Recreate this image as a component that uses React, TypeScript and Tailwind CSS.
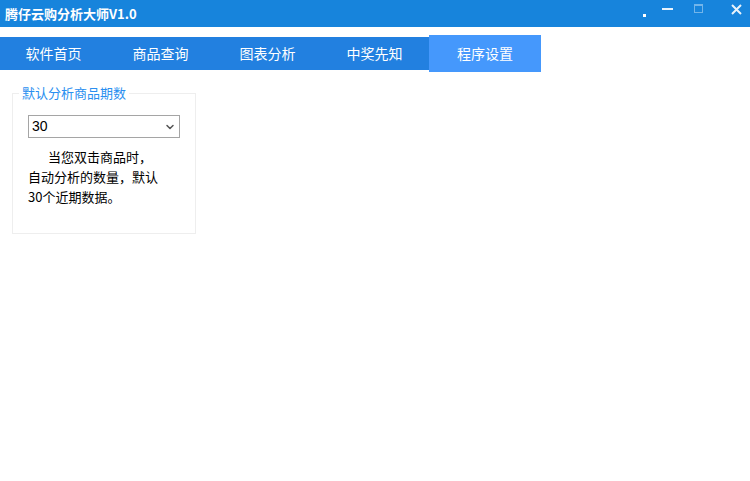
import { ChevronDown } from "lucide-react";

const tabs = ["软件首页", "商品查询", "图表分析", "中奖先知"];

export default function App() {
  return (
    <div
      className="w-[750px] h-[481px] bg-white overflow-hidden"
      style={{ fontFamily: '"Microsoft YaHei", "Noto Sans CJK SC", sans-serif' }}
    >
      {/* title bar */}
      <div className="h-[27px] bg-[#1784dc] flex items-center justify-between pl-[5px]">
        <span className="text-white text-[13px] font-bold leading-none">腾仔云购分析大师V1.0</span>
        <div className="flex items-center h-full text-white">
          <div className="w-[3px] h-[3px] bg-white mt-[4px] mr-[16px]" />
          <div className="w-[11px] h-[2px] bg-white/90 mb-[10px] mr-[21px]" />
          <div className="w-[9px] h-[9px] border border-white/40 border-t-2 mb-[10px] mr-[28px]" />
          <svg width="11" height="11" viewBox="0 0 11 11" className="mb-[8px] mr-[8px]">
            <path d="M1 1L10 10M10 1L1 10" stroke="white" strokeWidth="2" opacity="0.9" />
          </svg>
        </div>
      </div>

      {/* tabs */}
      <div className="mt-[8px] flex items-center">
        <div className="flex h-[33px] bg-[#2280e0]">
          {tabs.map((t) => (
            <div key={t} className="w-[107px] flex items-center justify-center text-white text-[14px]">
              {t}
            </div>
          ))}
          <div className="w-[1px]" />
        </div>
        <div className="w-[112px] h-[37px] bg-[#4598fc] flex items-center justify-center text-white text-[14px]">
          程序设置
        </div>
      </div>

      {/* settings group */}
      <div className="relative mt-[21px] ml-[12px] w-[184px] h-[141px] border border-[#eeeeee]">
        <span className="absolute -top-[10px] left-[6px] bg-white px-[3px] text-[13px] text-[#2a8ff0] leading-[18px]">
          默认分析商品期数
        </span>
        <div className="mt-[21px] ml-[15px] w-[152px] h-[23px] border border-[#a5a5a5] flex items-center justify-between px-[3px]">
          <span className="text-[14px] text-black" style={{ fontFamily: '"Liberation Sans", sans-serif' }}>30</span>
          <ChevronDown className="w-[12px] h-[12px] text-[#555]" strokeWidth={3} />
        </div>
        <div className="mt-[9px] ml-[15px] w-[150px] text-[13px] leading-[20px] text-black">
          <div className="pl-[20px]">当您双击商品时，</div>
          <div>自动分析的数量，默认</div>
          <div>30个近期数据。</div>
        </div>
      </div>
    </div>
  );
}
